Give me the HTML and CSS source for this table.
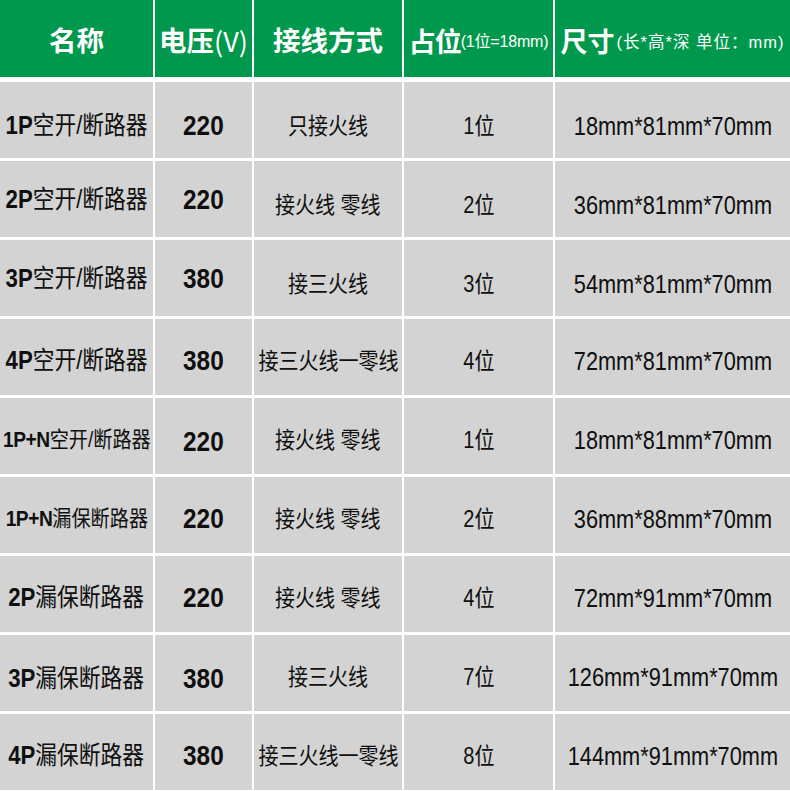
FILE: index.html
```html
<!DOCTYPE html>
<html lang="zh-CN">
<head>
<meta charset="utf-8">
<title>断路器规格表</title>
<link rel="stylesheet" href="styles.css">
</head>
<body>
<div class="table">
  <div class="row head">
    <div class="cell">名称</div>
    <div class="cell">电压<span class="paren">(V)</span></div>
    <div class="cell">接线方式</div>
    <div class="cell"><span class="big">占位</span><span class="note">(1位=18mm)</span></div>
    <div class="cell"><span class="big2">尺寸</span><span class="note2">(长*高*深 单位：mm)</span></div>
  </div>
  <div class="body">
    <div class="row lo">
      <div class="cell name"><span class="t"><b>1P</b>空开/断路器</span></div>
      <div class="cell volt"><span class="t">220</span></div>
      <div class="cell wire"><span class="t">只接火线</span></div>
      <div class="cell pos"><span class="t">1位</span></div>
      <div class="cell size"><span class="t">18mm*81mm*70mm</span></div>
    </div>
    <div class="row">
      <div class="cell name hi"><span class="t"><b>2P</b>空开/断路器</span></div>
      <div class="cell volt hi"><span class="t">220</span></div>
      <div class="cell wire lo"><span class="t">接火线 零线</span></div>
      <div class="cell pos lo"><span class="t">2位</span></div>
      <div class="cell size lo"><span class="t">36mm*81mm*70mm</span></div>
    </div>
    <div class="row">
      <div class="cell name hi"><span class="t"><b>3P</b>空开/断路器</span></div>
      <div class="cell volt hi"><span class="t">380</span></div>
      <div class="cell wire lo"><span class="t">接三火线</span></div>
      <div class="cell pos lo"><span class="t">3位</span></div>
      <div class="cell size lo"><span class="t">54mm*81mm*70mm</span></div>
    </div>
    <div class="row">
      <div class="cell name"><span class="t"><b>4P</b>空开/断路器</span></div>
      <div class="cell volt"><span class="t">380</span></div>
      <div class="cell wire"><span class="t">接三火线一零线</span></div>
      <div class="cell pos"><span class="t">4位</span></div>
      <div class="cell size"><span class="t">72mm*81mm*70mm</span></div>
    </div>
    <div class="row">
      <div class="cell name small"><span class="t"><b>1P+N</b>空开/断路器</span></div>
      <div class="cell volt lo"><span class="t">220</span></div>
      <div class="cell wire"><span class="t">接火线 零线</span></div>
      <div class="cell pos"><span class="t">1位</span></div>
      <div class="cell size"><span class="t">18mm*81mm*70mm</span></div>
    </div>
    <div class="row">
      <div class="cell name small"><span class="t"><b>1P+N</b>漏保断路器</span></div>
      <div class="cell volt"><span class="t">220</span></div>
      <div class="cell wire"><span class="t">接火线 零线</span></div>
      <div class="cell pos"><span class="t">2位</span></div>
      <div class="cell size"><span class="t">36mm*88mm*70mm</span></div>
    </div>
    <div class="row">
      <div class="cell name"><span class="t"><b>2P</b>漏保断路器</span></div>
      <div class="cell volt"><span class="t">220</span></div>
      <div class="cell wire"><span class="t">接火线 零线</span></div>
      <div class="cell pos"><span class="t">4位</span></div>
      <div class="cell size"><span class="t">72mm*91mm*70mm</span></div>
    </div>
    <div class="row">
      <div class="cell name lo"><span class="t"><b>3P</b>漏保断路器</span></div>
      <div class="cell volt lo"><span class="t">380</span></div>
      <div class="cell wire"><span class="t">接三火线</span></div>
      <div class="cell pos"><span class="t">7位</span></div>
      <div class="cell size"><span class="t">126mm*91mm*70mm</span></div>
    </div>
    <div class="row">
      <div class="cell name"><span class="t"><b>4P</b>漏保断路器</span></div>
      <div class="cell volt"><span class="t">380</span></div>
      <div class="cell wire"><span class="t">接三火线一零线</span></div>
      <div class="cell pos"><span class="t">8位</span></div>
      <div class="cell size"><span class="t">144mm*91mm*70mm</span></div>
    </div>
  </div>
</div>
</body>
</html>
```

FILE: styles.css
```css
html, body {
  margin: 0;
  padding: 0;
  background: #ffffff;
}

.table {
  width: 790px;
  font-family: "Liberation Sans", "Noto Sans CJK SC", sans-serif;
  color: #0f0f0f;
}

.row {
  display: grid;
  grid-template-columns: 153px 97px 148px 149px 235px;
  column-gap: 2px;
  height: 76px;
}

.body {
  display: flex;
  flex-direction: column;
  gap: 3px;
  margin-top: 5px;
}

.cell {
  display: flex;
  align-items: center;
  justify-content: center;
  background: #d3d3d3;
  white-space: nowrap;
  line-height: 1;
  box-sizing: border-box;
  padding-top: 8px;
}

.row.lo .cell,
.cell.lo {
  padding-top: 12px;
}

.cell.hi {
  padding-top: 2px;
}

/* header */
.row.head {
  height: 77px;
}

.head .cell {
  background: #00984c;
  color: #ffffff;
  font-family: "Noto Sans CJK SC", sans-serif;
  font-weight: 700;
  font-size: 27.5px;
  padding-top: 3px;
  align-items: center;
}

.head .paren {
  font-weight: 400;
  font-size: 27px;
}

.head .big {
  font-size: 27px;
  letter-spacing: -1px;
}

.head .note {
  font-family: "Liberation Sans", "Noto Sans CJK SC", sans-serif;
  font-weight: 400;
  font-size: 16px;
  letter-spacing: -0.2px;
  margin-top: 4px;
}

.head .big2 {
  font-size: 27px;
  margin-right: 2px;
}

.head .note2 {
  font-family: "Liberation Sans", "Noto Sans CJK SC", sans-serif;
  font-weight: 400;
  font-size: 16.5px;
  letter-spacing: 1px;
  margin-top: 4px;
}

/* body text: slightly condensed as in the source picture */
.t {
  display: inline-block;
  transform: scaleX(0.87);
  transform-origin: center;
}

.name {
  font-size: 25px;
}

.name b {
  font-weight: 700;
  font-size: 25.5px;
}

.name.small {
  font-size: 22px;
}

.name.small b {
  font-size: 22px;
  letter-spacing: -0.5px;
}

.volt {
  font-size: 28px;
  font-weight: 700;
}

.wire {
  font-size: 23px;
}

.pos {
  font-size: 23px;
}

.size {
  font-size: 25px;
}
```
